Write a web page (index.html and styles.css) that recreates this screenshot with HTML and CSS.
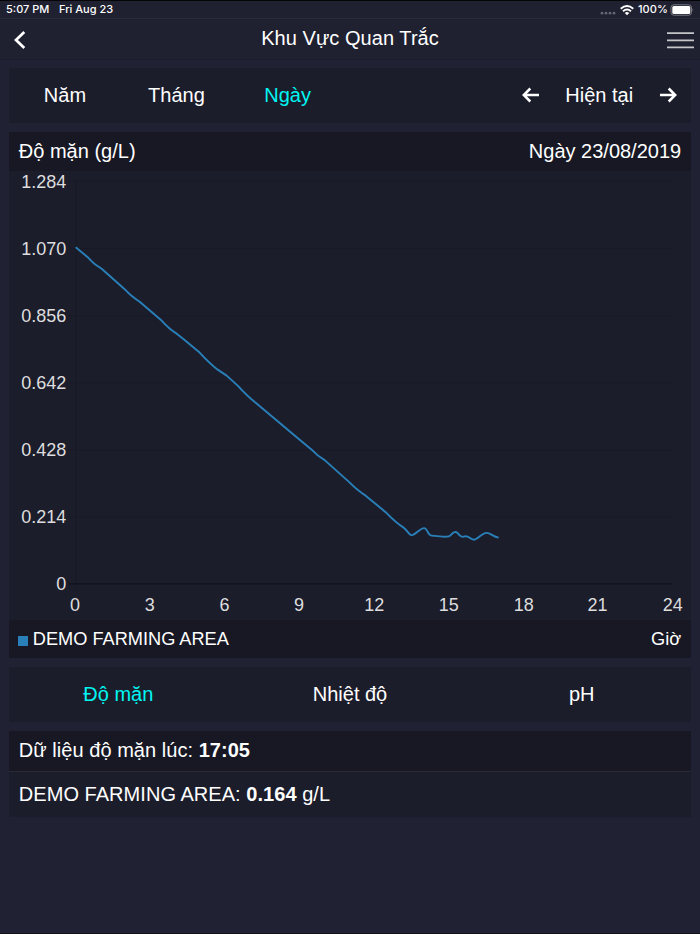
FILE: index.html
```html
<!DOCTYPE html>
<html lang="vi">
<head>
<meta charset="utf-8">
<title>Khu Vực Quan Trắc</title>
<link rel="stylesheet" href="styles.css">
</head>
<body>
<div class="screen">
  <div class="status">
    <span class="clock">5:07 PM</span><span class="date">Fri Aug 23</span>
    <svg class="status-icons" width="36" height="18" viewBox="0 0 36 18">
      <g fill="#65656f"><circle cx="6" cy="12.2" r="1.4"/><circle cx="10" cy="12.2" r="1.4"/><circle cx="14" cy="12.2" r="1.4"/><circle cx="18" cy="12.2" r="1.4"/></g>
      <g fill="none" stroke="#fff" stroke-width="1.9"><path d="M24.700 7.700Q31 2.300 37.300 7.700"/><path d="M27 10.300Q31 6.900 35 10.300"/></g>
      <path d="M28.700 12Q31 10.200 33.300 12L31 14.200Z" fill="#fff"/>
    </svg>
    <span class="percent">100%</span>
    <svg class="battery" width="25" height="18" viewBox="0 0 25 18">
      <rect x="1" y="3.800" width="20.500" height="10.400" rx="2.800" fill="none" stroke="#797983"/>
      <rect x="2.300" y="5.100" width="18" height="7.800" rx="1.500" fill="#fff"/>
      <path d="M22.500 7.500Q24.100 9 22.500 10.500Z" fill="#797983"/>
    </svg>
  </div>
  <header class="nav">
    <svg class="back" width="12" height="20" viewBox="0 0 12 20"><path d="M10.300 2L2 10L10.300 18" fill="none" stroke="#fff" stroke-width="2.700"/></svg>
    <h1><span class="title">Khu Vực Quan Trắc</span></h1>
    <svg class="menu" width="27" height="18" viewBox="0 0 27 18"><path d="M0 2.200H27M0 9.300H27M0 16.300H27" stroke="#c6c6c9" stroke-width="1.700"/></svg>
  </header>
  <main>
    <section class="panel range">
      <span class="year">Năm</span><span class="month">Tháng</span><span class="day active">Ngày</span>
      <svg class="prev" width="18" height="16" viewBox="0 0 18 16"><path d="M17 8H2M8.300 1.500L1.800 8L8.300 14.500" fill="none" stroke="#fff" stroke-width="2.500"/></svg>
      <span class="now">Hiện tại</span>
      <svg class="next" width="18" height="16" viewBox="0 0 18 16"><path d="M1 8H16M9.700 1.500L16.200 8L9.700 14.500" fill="none" stroke="#fff" stroke-width="2.500"/></svg>
    </section>
    <section class="panel chart">
      <div class="strip chart-head"><span class="metric">Độ mặn (g/L)</span><span class="chart-date">Ngày 23/08/2019</span></div>
      <svg class="plot" viewBox="9.33 171.33 681.34 448.34">
        <path class="grid" d="M69 181.5H673M69 249H673M69 316H673M69 383H673M69 450H673M69 517H673M76.5 181V590"/>
        <path class="axis" d="M69 584H673"/>
        <path class="series" d="M76 247.5L88 257.5Q93 263 96 265L102 269L125 289.5Q131 296 135 298.5L140 302L161 320Q170 330 177 334L184 339.5L199 352Q210 364 218 370L227 376L238 386Q248 397 256 403L300 440L312 450Q318 456.500 325 460.500L349 482Q358 491 366 496L386 512.500Q396 523 404 528C408 531 409.500 535.500 412 535.500C416 535.500 420 528.500 424.500 528.500C428 528.500 427.500 535.500 432 536L443 537C447 537.200 450 537 451 535.500C454 532 456 531.500 458 533.500C460 536 462 538 464 537C469 534.500 470 540.500 475 540C479 539 482 533.300 487 533.200C491 533.200 493 536.800 499 538"/>
        <g class="label y-axis">
          <text x="66.500" y="188">1.284</text><text x="66.500" y="254.900">1.070</text><text x="66.500" y="322">0.856</text><text x="66.500" y="389">0.642</text><text x="66.500" y="456">0.428</text><text x="66.500" y="523">0.214</text><text x="66.500" y="590.300">0</text>
        </g>
        <g class="label x-axis">
          <text x="75.300" y="611.300">0</text><text x="150" y="611.300">3</text><text x="224.800" y="611.300">6</text><text x="299.300" y="611.300">9</text><text x="374.500" y="611.300">12</text><text x="449.200" y="611.300">15</text><text x="524" y="611.300">18</text><text x="597.800" y="611.300">21</text><text x="673" y="611.300">24</text>
        </g>
      </svg>
      <div class="strip legend"><i class="swatch"></i><span class="area">DEMO FARMING AREA</span><span class="unit">Giờ</span></div>
    </section>
    <section class="panel metrics"><span class="active salt">Độ mặn</span><span class="temp">Nhiệt độ</span><span class="ph">pH</span></section>
    <section class="panel reading">
      <div class="strip when"><span>Dữ liệu độ mặn lúc: <b>17:05</b></span></div>
      <div class="value"><span>DEMO FARMING AREA: <b>0.164</b> g/L</span></div>
    </section>
  </main>
</div>
</body>
</html>
```
FILE: styles.css
```css
* { box-sizing: border-box; }
body { margin: 0; background: #202132; color: #fff; font: 20px/24px "Liberation Sans", Arial, sans-serif; }
.screen { height: 934px; border-top: 1px solid #050507; border-bottom: 1px solid #11111a; overflow: hidden; }
svg { display: block; flex: none; }
span { white-space: nowrap; }

.status { height: 17px; padding: 0 6px; display: flex; align-items: center; background: #1f2030; font: 500 11px/17px Inter, sans-serif; }
.status-icons { overflow: visible; }
.clock { width: 53px; }
.date { flex: 1; }
.percent { margin: 0 2px 0 6px; letter-spacing: .1px; }
.battery { margin-right: -1px; }

.nav { height: 42px; padding: 0 6px 0 14px; display: flex; align-items: center; background: #1f2030; border-top: 1px solid #292a3a; border-bottom: 1px solid #1c1d2c; }
.nav h1 { flex: 1; margin: 0 0 2px; text-align: center; font-size: 20px; font-weight: 400; line-height: 24px; letter-spacing: .05px; }
.back { margin-top: 1px; }
.menu { margin-top: 1px; }
.title { position: relative; left: 3.500px; }

main { padding: 7.500px 9.330px 0; display: flex; flex-direction: column; gap: 9.300px; }
.panel { background: #1c1d2b; border-radius: 1px; }
.strip { background: #171824; display: flex; align-items: center; padding: 0 9.500px; }
.active { color: #00f5f2; }

.range { height: 55px; display: flex; align-items: center; padding: 0 14px 0 34.500px; }
.month { margin-left: 62px; }
.day { margin-left: 59.500px; }
.prev { margin-left: auto; }
.now { margin: 0 25.500px 0 25.500px; }

.chart-head { height: 39.670px; padding-bottom: 1.500px; justify-content: space-between; }
.plot { width: 100%; height: 448.340px; }
.grid { fill: none; stroke: #191a27; stroke-width: 1; }
.axis { fill: none; stroke: #12131c; stroke-width: 1.500; }
.series { fill: none; stroke: #2980b9; stroke-width: 1.900; stroke-linejoin: round; }
.label { fill: #dededf; font-size: 18px; }
.y-axis { text-anchor: end; }
.x-axis { text-anchor: middle; }
.legend { height: 38.300px; padding-top: 1px; font-size: 18.200px; }
.swatch { width: 9.500px; height: 9.500px; margin: 3px 5px 0 -.500px; background: #2980b9; }
.unit { margin-left: auto; }

.metrics { height: 54.500px; padding-bottom: 1.500px; display: grid; grid-template-columns: 218px 1fr 218px; align-items: center; text-align: center; }
.reading { letter-spacing: .04px; }
.when { height: 40px; padding-bottom: 1.500px; }
.value { height: 46px; padding: 0 9.500px 1.500px; display: flex; align-items: center; border-top: 1px solid #292a36; }
```
